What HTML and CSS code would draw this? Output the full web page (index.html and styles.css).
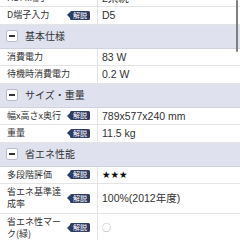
FILE: index.html
```html
<!DOCTYPE html>
<html lang="ja">
<head>
    <meta charset="UTF-8">
    <meta name="viewport" content="width=device-width, initial-scale=1.0">
    <title>仕様</title>
    <link rel="stylesheet" href="styles.css">
</head>
<body>

<div class="spec">
    <div class="row">
        <div class="label"><span class="name">HDMI端子</span></div>
        <div class="value">2系統</div>
    </div>
    <div class="row">
        <div class="label"><span class="name">D端子入力</span><span class="help">解説</span></div>
        <div class="value">D5</div>
    </div>

    <div class="section"><span class="toggle"></span>基本仕様</div>
    <div class="row">
        <div class="label"><span class="name">消費電力</span></div>
        <div class="value">83 W</div>
    </div>
    <div class="row">
        <div class="label"><span class="name">待機時消費電力</span></div>
        <div class="value">0.2 W</div>
    </div>

    <div class="section"><span class="toggle"></span>サイズ・重量</div>
    <div class="row">
        <div class="label"><span class="name">幅x高さx奥行</span><span class="help">解説</span></div>
        <div class="value">789x577x240 mm</div>
    </div>
    <div class="row">
        <div class="label"><span class="name">重量</span><span class="help">解説</span></div>
        <div class="value">11.5 kg</div>
    </div>

    <div class="section"><span class="toggle"></span>省エネ性能</div>
    <div class="row">
        <div class="label"><span class="name">多段階評価</span><span class="help">解説</span></div>
        <div class="value"><span class="stars">★★★</span></div>
    </div>
    <div class="row">
        <div class="label"><span class="name">省エネ基準達成率</span><span class="help">解説</span></div>
        <div class="value">100%(2012年度)</div>
    </div>
    <div class="row">
        <div class="label"><span class="name">省エネ性マーク(緑)</span><span class="help">解説</span></div>
        <div class="value"><span class="mark">○</span></div>
    </div>
</div>

<div class="scrollbar"></div>

</body>
</html>
```

FILE: styles.css
```css
body {
    margin: 0;
    padding: 0;
    background-color: #fff;
    color: #333;
    font-family: 'Liberation Sans', 'Noto Sans CJK JP', sans-serif;
    overflow: hidden;
}

/* list is scrolled a little, the first row sits above the fold */
.spec {
    margin-top: -10.5px;
}

.row {
    display: flex;
    border-bottom: 1px solid #e4e4e4;
}

.label {
    width: 83px;
    flex: none;
    display: flex;
    align-items: center;
    gap: 3px;
    padding: 2px 7px 2.5px 7px;
    border-right: 1px solid #e4e4e4;
    font-family: 'Noto Sans CJK JP', sans-serif;
    font-size: 9px;
    line-height: 12px;
}

.name {
    flex: 1;
    min-width: 0;
}

.help {
    position: relative;
    flex: none;
    background-color: #2e3b63;
    color: #fff;
    font-size: 7px;
    line-height: 9px;
    padding: 0 3px;
    border-radius: 1.5px;
}

.help::before {
    content: "";
    position: absolute;
    left: -3px;
    top: 50%;
    margin-top: -3px;
    border-style: solid;
    border-width: 3px 3px 3px 0;
    border-color: transparent #2e3b63 transparent transparent;
}

.value {
    flex: 1;
    display: flex;
    align-items: center;
    padding: 2px 4px 2.5px 4px;
    font-size: 10.5px;
    line-height: 12px;
}

.stars {
    font-family: 'DejaVu Sans', sans-serif;
    font-size: 9.5px;
    color: #111;
}

.mark {
    font-family: 'Noto Sans CJK JP', sans-serif;
    font-size: 9px;
    color: #9a9a9a;
}

.section {
    display: flex;
    align-items: center;
    gap: 7px;
    padding: 4px 6px 5px 6px;
    background-color: #dfe1ee;
    border-bottom: 1px solid #cfd2e0;
    font-family: 'Noto Sans CJK JP', sans-serif;
    font-size: 10px;
    line-height: 14px;
    color: #333;
}

.toggle {
    position: relative;
    width: 10px;
    height: 10px;
    flex: none;
    background-color: #fff;
    border: 1px solid #b9bccb;
    border-radius: 2px;
}

.toggle::after {
    content: "";
    position: absolute;
    left: 2px;
    right: 2px;
    top: 4px;
    height: 2px;
    background-color: #333;
}

.scrollbar {
    position: fixed;
    top: 0;
    right: 2px;
    width: 2.5px;
    height: 52px;
    border-radius: 2px;
    background-color: #7f7f7f;
}
```
